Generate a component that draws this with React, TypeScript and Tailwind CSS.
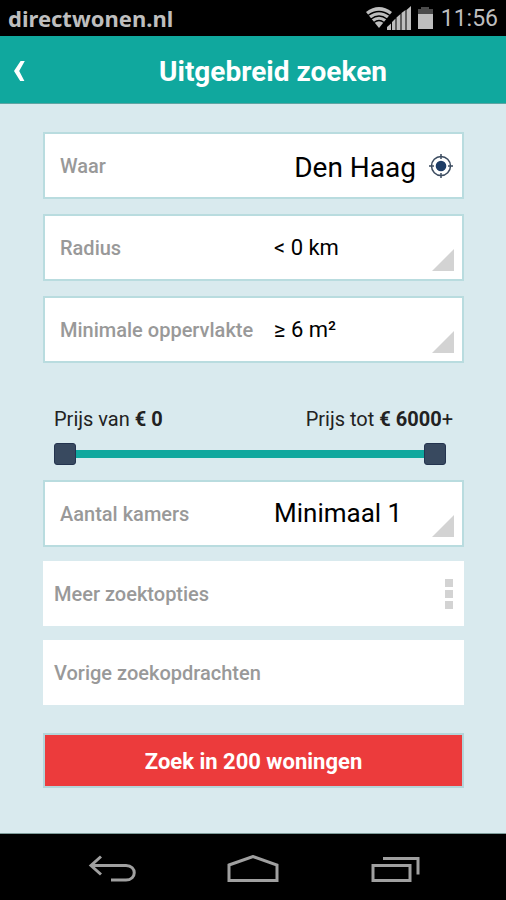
import { useState, type ReactNode, type SelectHTMLAttributes } from "react";

const MAX_PRICE = 6000;

export default function App() {
  const [place, setPlace] = useState("Den Haag");

  return (
    <div className="flex min-h-screen flex-col bg-[#d9eaee] font-['Roboto',sans-serif] text-black">
      <StatusBar />
      <header className="flex h-[68px] items-center border-b border-[#5fa5a3] bg-[#10a89e] px-3 pt-1 text-white">
        <button type="button" aria-label="Terug" className="flex w-8 items-center">
          <svg width="16" height="24" viewBox="0 0 16 24" fill="white">
            <path d="M8.6 1H12.800L7.200 11L12.400 21H8.200L2 11Z" />
          </svg>
        </button>
        <h1 className="flex-1 pl-2 text-center text-[28px] font-bold">Uitgebreid zoeken</h1>
      </header>

      <main className="flex-1 pt-7 pr-[42px] pl-[43px]">
        <form onSubmit={(e) => e.preventDefault()}>
          <div className="flex flex-col gap-[15px]">
            <div className="flex h-[67px] items-center border-2 border-[#b9dcdf] bg-white pr-2 pl-[15px]">
              <label htmlFor="place" className="text-[20px] font-medium text-[#999]">
                Waar
              </label>
              <input
                id="place"
                type="text"
                value={place}
                onChange={(e) => setPlace(e.target.value)}
                className="min-w-0 flex-1 bg-transparent pt-1 text-right text-[28px] outline-none"
              />
              <button type="button" aria-label="Mijn locatie" className="ml-3">
                <TargetIcon />
              </button>
            </div>
            <SelectField id="radius" label="Radius" className="text-[22px]">
              <option>&lt; 0 km</option>
              <option>&lt; 5 km</option>
              <option>&lt; 10 km</option>
            </SelectField>
            <SelectField id="area" label="Minimale oppervlakte" className="text-[22px]">
              <option>≥ 6 m²</option>
              <option>≥ 20 m²</option>
              <option>≥ 50 m²</option>
            </SelectField>
          </div>

          <PriceRange />

          <div className="flex flex-col gap-[14px]">
            <SelectField id="rooms" label="Aantal kamers" className="text-[26px]">
              <option>Minimaal 1</option>
              <option>Minimaal 2</option>
              <option>Minimaal 3</option>
            </SelectField>
            <LinkRow label="Meer zoektopties">
              <span className="flex flex-col gap-[3px]">
                <span className="size-2 bg-[#d3d3d3]" />
                <span className="size-2 bg-[#d3d3d3]" />
                <span className="size-2 bg-[#d3d3d3]" />
              </span>
            </LinkRow>
            <LinkRow label="Vorige zoekopdrachten" />
          </div>

          <button
            type="submit"
            className="mt-7 h-[55px] w-full border-2 border-[#b4d5da] bg-[#ec3b3c] pt-[2px] text-[22px] font-bold text-white"
          >
            Zoek in 200 woningen
          </button>
        </form>
      </main>

      <NavBar />
    </div>
  );
}

function SelectField({
  id,
  label,
  className,
  children,
}: SelectHTMLAttributes<HTMLSelectElement> & { id: string; label: string }) {
  return (
    <div className="relative grid h-[67px] grid-cols-[214px_1fr] items-stretch border-2 border-[#b9dcdf] bg-white pl-[15px]">
      <label htmlFor={id} className="flex items-center text-[20px] font-medium text-[#999]">
        {label}
      </label>
      <select id={id} className={`min-w-0 appearance-none bg-transparent outline-none ${className}`}>
        {children}
      </select>
      {/* dropdown corner */}
      <svg
        aria-hidden
        width="22"
        height="22"
        viewBox="0 0 22 22"
        className="pointer-events-none absolute right-2 bottom-2"
      >
        <path d="M22 0V22H0Z" fill="#d3d3d3" />
      </svg>
    </div>
  );
}

function LinkRow({ label, children }: { label: string; children?: ReactNode }) {
  return (
    <button
      type="button"
      className="flex h-[65px] w-full items-center justify-between bg-white px-[11px] text-[20px] font-medium text-[#999]"
    >
      {label}
      {children}
    </button>
  );
}

// both inputs share one track, so only the thumbs take the pointer
const rangeClass =
  "pointer-events-none absolute inset-0 h-[22px] w-full appearance-none bg-transparent [&::-webkit-slider-thumb]:pointer-events-auto [&::-webkit-slider-thumb]:size-[22px] [&::-webkit-slider-thumb]:appearance-none [&::-webkit-slider-thumb]:rounded-[3px] [&::-webkit-slider-thumb]:border [&::-webkit-slider-thumb]:border-[#24344f] [&::-webkit-slider-thumb]:bg-[#38495f]";

function PriceRange() {
  const [min, setMin] = useState(0);
  const [max, setMax] = useState(MAX_PRICE);

  return (
    <div className="mt-11 mb-[15px] px-[11px]">
      <div className="flex justify-between text-[20px] leading-6 text-[#222]">
        <label htmlFor="price-min">
          Prijs van <b>€ {min}</b>
        </label>
        <label htmlFor="price-max">
          Prijs tot <b>€ {max}</b>
          {max === MAX_PRICE && "+"}
        </label>
      </div>
      <div className="relative mt-3 mr-[7px] flex h-[22px] items-center">
        <div className="h-2 w-full bg-[#10a89e]" />
        <input
          id="price-min"
          type="range"
          min={0}
          max={MAX_PRICE}
          step={100}
          value={min}
          onChange={(e) => setMin(Math.min(+e.target.value, max))}
          className={rangeClass}
        />
        <input
          id="price-max"
          type="range"
          min={0}
          max={MAX_PRICE}
          step={100}
          value={max}
          onChange={(e) => setMax(Math.max(+e.target.value, min))}
          className={rangeClass}
        />
      </div>
    </div>
  );
}

function TargetIcon() {
  return (
    <svg width="26" height="26" viewBox="0 0 26 26" fill="none" stroke="#3c4c60" strokeWidth="1.5">
      <circle cx="13" cy="13" r="9.5" />
      <circle cx="13" cy="13" r="5.3" fill="#1f3d66" stroke="none" />
      <path d="M13 1V6M13 20V25M1 13H6M20 13H25" />
    </svg>
  );
}

function StatusBar() {
  return (
    <div className="flex h-9 items-center justify-between bg-black px-2 text-[#bebebe]">
      <span className="font-['Noto_Sans',sans-serif] text-[22px] leading-8 font-bold">directwonen.nl</span>
      <div className="flex items-center pt-[2px]">
        <svg width="70" height="26" viewBox="0 0 70 26" fill="#bebebe" aria-hidden>
          {/* wifi */}
          <path d="M3 6Q16 -4 29 6L16 22Z" />
          <path d="M5 9.500Q16 1.500 27 9.500M8 13Q16 7 24 13M11 16.500Q16 12.500 21 16.500" fill="none" stroke="#000" strokeWidth="1.3" />
          {/* signal */}
          <path d="M24 24V21L28 17.500V24ZM29 24V16L32.500 12.500V24ZM33.500 24V11.500L37.500 8V24ZM38.500 24V7L42.500 4V24ZM43.500 24V4L48 0V24Z" />
          {/* battery */}
          <path d="M55 8V3H58V1H66V3H70V8Z" fill="#4b4b4b" />
          <path d="M55 8H70V23H55Z" />
        </svg>
        <span className="ml-2 text-[23px]">11:56</span>
      </div>
    </div>
  );
}

function NavBar() {
  return (
    <nav className="flex h-[67px] items-center justify-between border-t border-[#7f9d9b] bg-black px-[86px] pt-[6px]">
      <button type="button" aria-label="Vorige">
        <svg width="50" height="30" viewBox="0 0 50 30" fill="none" stroke="#a0a0a0" strokeWidth="3">
          <path d="M15 1.500L5 10.500L15 19.500M5 10.500H40C51 10.500 51 25 40 25H25" />
        </svg>
      </button>
      <button type="button" aria-label="Startscherm">
        <svg width="54" height="30" viewBox="0 0 54 30" fill="none" stroke="#a0a0a0" strokeWidth="3">
          <path d="M3 10L27 1.500L51 10V25.500H3Z" />
        </svg>
      </button>
      <button type="button" aria-label="Recente apps">
        <svg width="50" height="30" viewBox="0 0 50 30" fill="none" stroke="#a0a0a0" strokeWidth="3">
          <path d="M3 10.500H40V25.500H3ZM13 3.500H48V19.500" />
        </svg>
      </button>
    </nav>
  );
}
